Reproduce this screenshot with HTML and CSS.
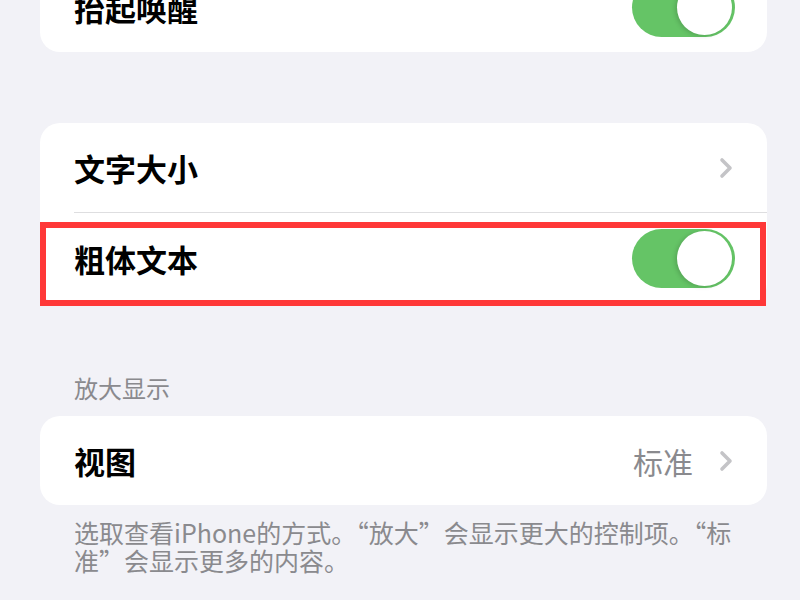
FILE: index.html
```html
<!DOCTYPE html>
<html lang="zh-CN">
<head>
    <meta charset="UTF-8">
    <meta name="viewport" content="width=device-width, initial-scale=1.0">
    <title>显示与文字大小</title>
    <link rel="stylesheet" href="styles.css">
</head>
<body>
    <div class="page">
        <section class="group group-top">
            <div class="row">
                <span class="label">抬起唤醒</span>
                <span class="switch on"><span class="knob"></span></span>
            </div>
        </section>

        <section class="group group-text">
            <div class="row">
                <span class="label">文字大小</span>
                <svg class="chevron" width="14" height="22" viewBox="0 0 14 22">
                    <polyline points="3,3 11,11 3,19" fill="none" stroke="#c4c4c7" stroke-width="3.6" stroke-linecap="round" stroke-linejoin="round"/>
                </svg>
            </div>
            <div class="separator"></div>
            <div class="row highlighted">
                <span class="label">粗体文本</span>
                <span class="switch on"><span class="knob"></span></span>
                <div class="highlight-box"></div>
            </div>
        </section>

        <h2 class="group-title">放大显示</h2>
        <section class="group">
            <div class="row">
                <span class="label">视图</span>
                <span class="value">标准</span>
                <svg class="chevron" width="14" height="22" viewBox="0 0 14 22">
                    <polyline points="3,3 11,11 3,19" fill="none" stroke="#c4c4c7" stroke-width="3.6" stroke-linecap="round" stroke-linejoin="round"/>
                </svg>
            </div>
        </section>
        <p class="group-footer">选取查看iPhone的方式。“放大”会显示更大的控制项。“标准”会显示更多的内容。</p>
    </div>
</body>
</html>
```

FILE: styles.css
```css
body {
    margin: 0;
    padding: 0;
    background-color: #f2f2f7;
    font-family: "Noto Sans CJK SC", "Noto Sans", sans-serif;
    overflow: hidden;
}
.page {
    padding: 0 33px 0 40px;
    border-left: 8px solid #efeff0;
    margin-left: -8px;
}
.group {
    background: white;
    border-radius: 20px;
}
.group-top {
    margin-top: -37px;
}
.group-text {
    margin-top: 71px;
}
.row {
    position: relative;
    display: flex;
    align-items: center;
    height: 89px;
    padding: 0 34px;
}
.highlighted {
    height: 91px;
}
.label {
    flex: 1;
    font-size: 31px;
    font-weight: 600;
    color: #000;
}
.value {
    font-size: 30px;
    color: #8a8a8e;
    margin-right: 26px;
}
.chevron {
    display: block;
}
.separator {
    height: 1px;
    margin-left: 34px;
    background-color: #dedee0;
}
.switch {
    display: flex;
    align-items: center;
    width: 103px;
    height: 59px;
    border-radius: 30px;
    background-color: #65c466;
    margin-right: -2px;
    box-sizing: border-box;
    padding: 2px 3px;
}
.switch.on {
    justify-content: flex-end;
}
.knob {
    width: 55px;
    height: 55px;
    border-radius: 50%;
    background: white;
    box-shadow: -2px 1px 4px rgba(0, 0, 0, 0.15);
}
.highlight-box {
    position: absolute;
    left: 0;
    right: 1px;
    top: 9px;
    bottom: -2px;
    border: 6px solid #ff3838;
}
.group-title {
    margin: 69px 0 13px 34px;
    font-size: 24px;
    line-height: 30px;
    font-weight: 400;
    color: #8a8a8e;
}
.group-footer {
    margin: 13px 32px 0 34px;
    font-size: 25px;
    line-height: 28px;
    color: #8a8a8e;
}
```
